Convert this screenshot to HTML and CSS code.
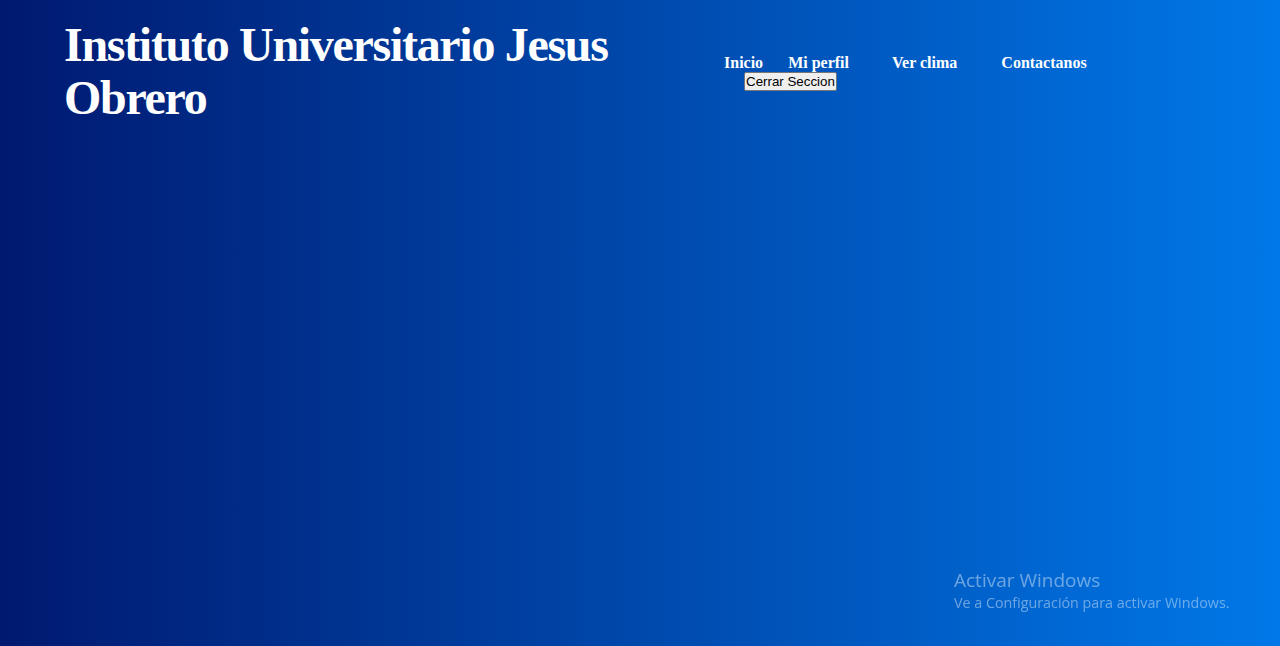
FILE: index.html
```html
<!DOCTYPE html>
<html lang="es">
<head>
<meta charset="utf-8">
<title>Instituto Universitario Jesus Obrero</title>
<link rel="stylesheet" href="styles.css">
</head>
<body>
<header class="header">
  <h1 class="title">Instituto Universitario Jesus Obrero</h1>
  <nav class="nav">
    <ul class="menu">
      <li class="item item-inicio"><a href="#">Inicio</a></li>
      <li class="item item-perfil"><a href="#">Mi perfil</a></li>
      <li class="item item-clima"><a href="#">Ver clima</a></li>
      <li class="item item-contacto"><a href="#">Contactanos</a></li>
    </ul>
    <button class="logout" type="button">Cerrar Seccion</button>
  </nav>
</header>
<div class="watermark">
  <div class="wm-title">Activar Windows</div>
  <div class="wm-sub">Ve a Configuración para activar Windows.</div>
</div>
</body>
</html>
```
FILE: styles.css
```css
html, body {
  height: 100%;
}
body {
  margin: 0;
  background: linear-gradient(to right, #001970, #0078e8);
  font-family: "Liberation Serif", "Times New Roman", serif;
  color: #fff;
  overflow: hidden;
}
.header {
  display: flex;
  align-items: flex-start;
}
.title {
  width: 600px;
  margin: 18px 0 0 64px;
  font-size: 48px;
  line-height: 53px;
  letter-spacing: -1.3px;
  font-weight: bold;
}
.nav {
  margin: 54px 0 0 60px;
}
.menu {
  list-style: none;
  display: flex;
  margin: 0;
  padding: 0;
}
.item a {
  color: #fff;
  text-decoration: none;
  font-weight: bold;
  font-size: 16px;
  line-height: 18px;
}
.item-perfil { margin-left: 25px; }
.item-clima { margin-left: 43px; }
.item-contacto { margin-left: 44px; }
.logout {
  display: block;
  margin: 0 0 0 20px;
  font-family: "Liberation Sans", Arial, sans-serif;
  font-size: 13.33px;
  padding: 1px 1px;
  border: 1px solid #767676;
  border-radius: 2px;
  background: #efefef;
  color: #000;
}
.watermark {
  position: fixed;
  left: 954px;
  top: 568px;
  font-family: "Open Sans", "Noto Sans", sans-serif;
  color: rgba(255, 255, 255, 0.42);
}
.wm-title {
  font-size: 19px;
  line-height: 24px;
}
.wm-sub {
  font-size: 14.3px;
  line-height: 21px;
}
```
